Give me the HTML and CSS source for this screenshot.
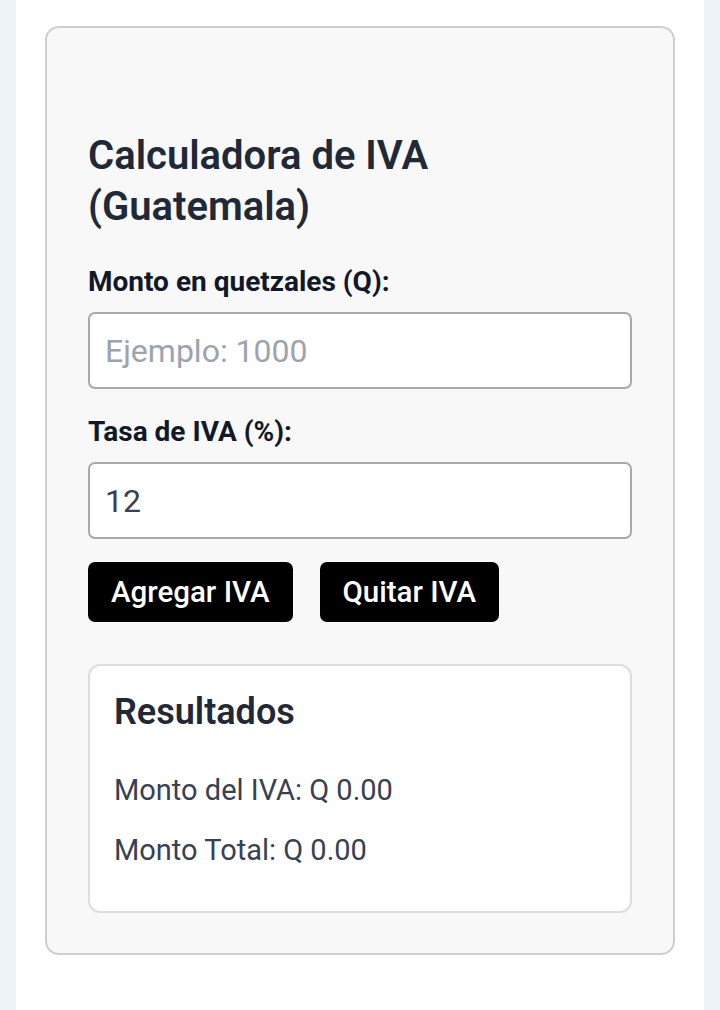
FILE: index.html
```html
<!DOCTYPE html>
<html lang="es">
<head>
    <meta charset="UTF-8">
    <meta name="viewport" content="width=device-width, initial-scale=1.0">
    <link rel="stylesheet" href="styles.css">
    <title>Calculadora de IVA</title>
</head>
<body>
    <div class="page">
        <div class="card">
            <h1>Calculadora de IVA (Guatemala)</h1>
            <div class="field">
                <label for="monto">Monto en quetzales (Q):</label>
                <input type="number" id="monto" placeholder="Ejemplo: 1000">
            </div>
            <div class="field">
                <label for="tasa">Tasa de IVA (%):</label>
                <input type="number" id="tasa" value="12">
            </div>
            <div class="actions">
                <button id="agregar">Agregar IVA</button>
                <button id="quitar">Quitar IVA</button>
            </div>
            <div class="results">
                <h2>Resultados</h2>
                <p>Monto del IVA: Q <span id="iva">0.00</span></p>
                <p>Monto Total: Q <span id="total">0.00</span></p>
            </div>
        </div>
    </div>
    <script>
        let monto = document.getElementById('monto');
        let tasa = document.getElementById('tasa');
        let ivaOut = document.getElementById('iva');
        let totalOut = document.getElementById('total');

        document.getElementById('agregar').addEventListener('click', () => {
            let m = parseFloat(monto.value) || 0;
            let t = (parseFloat(tasa.value) || 0) / 100;
            let iva = m * t;
            ivaOut.innerText = iva.toFixed(2);
            totalOut.innerText = (m + iva).toFixed(2);
        });

        document.getElementById('quitar').addEventListener('click', () => {
            let m = parseFloat(monto.value) || 0;
            let t = (parseFloat(tasa.value) || 0) / 100;
            let base = m / (1 + t);
            ivaOut.innerText = (m - base).toFixed(2);
            totalOut.innerText = base.toFixed(2);
        });
    </script>
</body>
</html>
```

FILE: styles.css
```css
body{
    margin: 0;
    background: #eef3f8;
    font-family: Roboto, "Liberation Sans", sans-serif;
}

.page{
    width: 688px;
    min-height: 100vh;
    margin: 0 auto;
    background: #ffffff;
    padding: 26px 29px;
    box-sizing: border-box;
}

.card{
    background: #f8f8f8;
    border: 2px solid #cfcfcf;
    border-radius: 14px;
    padding: 40px 41px;
}

h1{
    margin: 62px 0 35px;
    font-size: 40px;
    line-height: 51px;
    font-weight: 600;
    color: #1f2937;
}

.field{
    margin-bottom: 28px;
}

.field + .field{
    margin-bottom: 23px;
}

label{
    display: block;
    font-size: 28px;
    line-height: 30px;
    font-weight: 700;
    color: #111827;
    margin-bottom: 15px;
}

input{
    display: block;
    width: 100%;
    height: 77px;
    box-sizing: border-box;
    border: 2px solid #a9a9a9;
    border-radius: 7px;
    padding: 0 15px;
    font-family: inherit;
    font-size: 32px;
    color: #374151;
    background: #ffffff;
}

input::placeholder{
    color: #9ca3af;
}

.actions{
    display: flex;
    gap: 27px;
    margin-bottom: 42px;
}

button{
    height: 60px;
    padding: 0 23px;
    border: none;
    border-radius: 7px;
    background: #000000;
    color: #ffffff;
    font-family: inherit;
    font-size: 29.5px;
    font-weight: 500;
}

.results{
    background: #ffffff;
    border: 2px solid #dddddd;
    border-radius: 12px;
    padding: 24px 24px 23px;
}

.results h2{
    margin: 0 0 34px;
    font-size: 36px;
    line-height: 44px;
    font-weight: 600;
    color: #1f2937;
}

.results p{
    margin: 16px 0;
    font-size: 29px;
    line-height: 44px;
    color: #374151;
}
```
